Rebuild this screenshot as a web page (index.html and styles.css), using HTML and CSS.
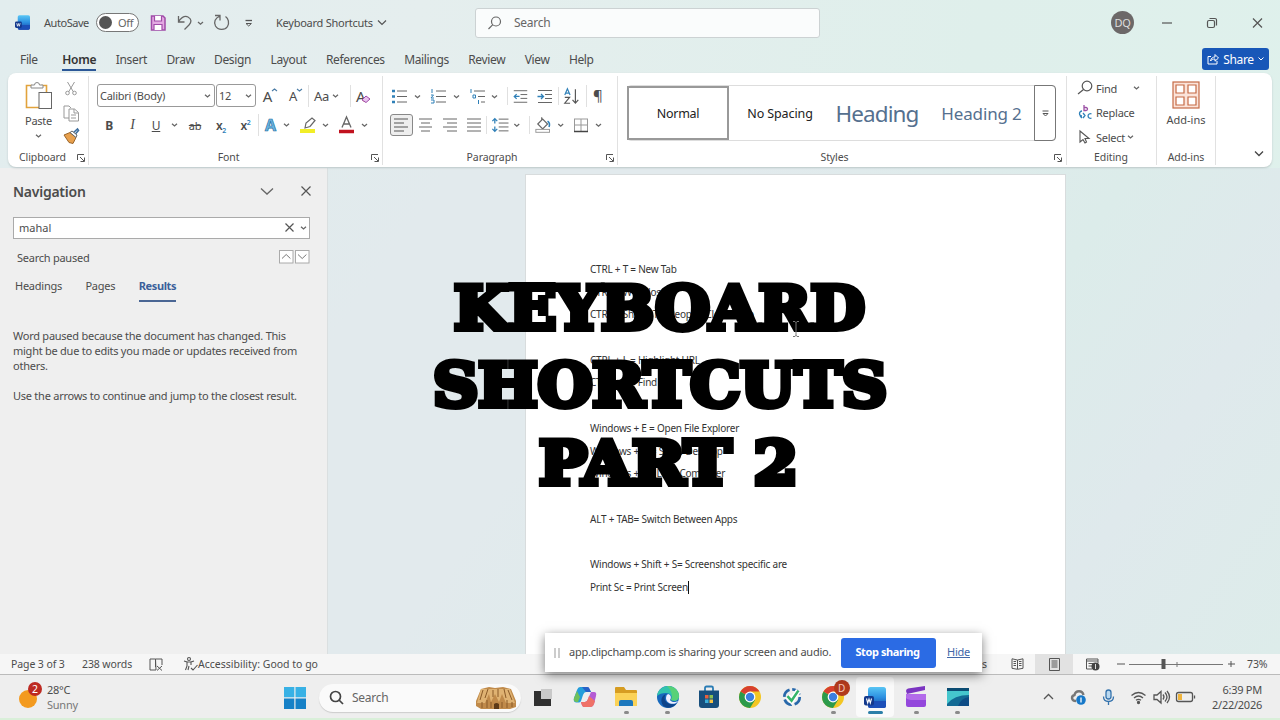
FILE: index.html
```
<!DOCTYPE html>
<html lang="en">
<head>
  <meta charset="UTF-8">
  <title>Keyboard Shortcuts - Word</title>
  <link rel="stylesheet" href="styles.css">
</head>
<body>
  <!-- shared shapes -->
  <svg class="defs" width="0" height="0">
    <defs>
      <path id="caret" d="M0 0l2.500 2.200L5 0" fill="none" stroke="#666" stroke-width="1.300"/>
      <g id="launcher" fill="none" stroke="#555" stroke-width="1"><path d="M.5 6V.5H7M3 3l4 4M7.500 3.500v4h-4"/></g>
      <g id="chrome">
        <circle cx="12" cy="12" r="11" fill="#f3c623"/>
        <path d="M12 12L2.500 6.500A11 11 0 0 0 12 23l5-8z" fill="#2c9a4b"/>
        <path d="M12 12L2.500 6.500A11 11 0 0 1 21.500 6.500H12z" fill="#d8402f"/>
        <circle cx="12" cy="12" r="5.400" fill="#fff"/><circle cx="12" cy="12" r="4.200" fill="#3c7fe0"/>
      </g>
      <linearGradient id="wordGrad" x1="0" y1="0" x2="0" y2="1">
        <stop offset="0" stop-color="#59c6f5"/><stop offset=".5" stop-color="#2b8ee0"/><stop offset="1" stop-color="#173f9d"/>
      </linearGradient>
      <g id="word">
        <rect x="4" y="0" width="18" height="21" rx="2.500" fill="url(#wordGrad)"/>
        <path d="M4 14h18v4.500a2.500 2.500 0 0 1-2.500 2.500h-13A2.500 2.500 0 0 1 4 18.500z" fill="#1c4fb8"/>
        <rect x="0" y="9" width="10" height="9.500" rx="2" fill="#14398c"/>
        <path d="M2.500 11.500l1.200 4.500L5 12l1.300 4 1.200-4.500" fill="none" stroke="#fff" stroke-width="1.100"/>
      </g>
    </defs>
  </svg>

  <div class="window">
    <header class="titlebar">
      <svg class="app-icon" width="15" height="15" viewBox="0 0 22 21"><use href="#word"/></svg>
      <span class="autosave">AutoSave</span>
      <span class="toggle"><i></i>Off</span>
      <svg class="quick" width="100" height="20" viewBox="0 0 100 20">
        <path d="M1.500 3h11.500l2 2v12H1.500z" fill="#e3a9e2" stroke="#a04ba8" stroke-width="1.500"/>
        <path d="M4.500 3v5h7V3M4 17v-5.500h8V17" fill="#fff" stroke="#a04ba8" stroke-width="1.200"/>
        <path d="M28.500 3v6h6M28.500 8.500c3-4 6.500-6 9.500-4.500 4 2 3.500 5.500 1 8l-4.500 4.500" fill="none" stroke="#666" stroke-width="1.300"/>
        <use href="#caret" x="48" y="9"/>
        <path d="M65 2.500h5v5M70 3c-5 2-6.500 6-4.500 10 2.500 4.500 9.500 4.500 12 .5 2-3.500 1-8-2-10" fill="none" stroke="#666" stroke-width="1.300"/>
        <path d="M95.500 7.500h6.500" stroke="#555" stroke-width="1.300"/><path d="M96 10.500l2.700 2.500 2.700-2.500z" fill="none" stroke="#555"/>
      </svg>
      <span class="doc-name">Keyboard Shortcuts</span>
      <svg class="name-caret" width="10" height="6"><path d="M1 .500l4 4 4-4" fill="none" stroke="#555" stroke-width="1.200"/></svg>
      <div class="search">
        <svg width="16" height="16" viewBox="0 0 16 16" fill="none" stroke="#666" stroke-width="1.200"><circle cx="9" cy="6.500" r="4.500"/><path d="M5.800 9.700L1.500 14"/></svg>
        <span>Search</span>
      </div>
      <span class="avatar">DQ</span>
      <svg class="win-buttons" width="102" height="14" viewBox="0 0 102 14" fill="none" stroke="#555" stroke-width="1.200">
        <path d="M0 7h10"/><rect x="45.500" y="4.500" width="7" height="7" rx="1.500"/><path d="M47.500 2.500H53a1.500 1.500 0 0 1 1.500 1.500v5.500"/><path d="M91 2.500l9 9M100 2.500l-9 9"/>
      </svg>
    </header>

    <nav class="tabs">
      <span>File</span><span class="current">Home</span><span>Insert</span><span>Draw</span><span>Design</span><span>Layout</span><span>References</span><span>Mailings</span><span>Review</span><span>View</span><span>Help</span>
      <div class="share">
        <svg width="12" height="12" viewBox="0 0 12 12" fill="none" stroke="#fff" stroke-width="1"><path d="M4 3.500H1v7.500h9V8M3.500 8c.5-3 2.500-4 4.500-4V1.500l3.500 3.500L8 8.200V6C6 6 4.500 6.500 3.500 8z"/></svg>
        <span>Share</span>
        <svg width="6" height="4"><path d="M.500.500L3 3 5.500.500" fill="none" stroke="#fff"/></svg>
      </div>
    </nav>

    <section class="ribbon">
      <div class="group clipboard">
        <div class="tools">
          <div class="paste">
            <svg width="28" height="30" viewBox="0 0 28 30">
              <path d="M7 4.500H1.500v22H14M16 4.500h5.500V11" fill="none" stroke="#e2a33c" stroke-width="1.600"/>
              <path d="M6 7V4h3.500a2.500 2.500 0 0 1 5 0H18v3z" fill="#fff" stroke="#888"/>
              <rect x="14" y="11.500" width="12.500" height="16" fill="#fff" stroke="#666"/>
            </svg>
            <span>Paste</span>
            <svg width="6" height="4"><use href="#caret" y=".8"/></svg>
          </div>
          <svg class="clip-side" width="18" height="66" viewBox="0 0 18 66" fill="none" stroke="#999" stroke-width="1">
            <path d="M5.500 1l6 10M12.500 1l-6 10"/><circle cx="5.500" cy="12" r="1.800"/><circle cx="12.500" cy="12" r="1.800"/>
            <path d="M7 37H2V25h5l2 2M7 28h5.500l4 3.500V40H7zM12 28v4h4M9 34h5M9 37h5"/>
            <path d="M11 52l4.500-4 1 1.500-4 4.500" stroke="#3d6e9e" stroke-width="1.600"/><path d="M2 54l6-2.500 6 5-3 6-4-1z" fill="#e8a04c" stroke="#9a652a"/><path d="M8 51.500l2-1.500 5 4-1 2.500z" fill="#fff" stroke="#666"/>
          </svg>
        </div>
        <div class="label">Clipboard<svg width="9" height="9"><use href="#launcher"/></svg></div>
      </div>

      <div class="group font">
        <div class="row row-font">
          <span class="combo">Calibri (Body)<svg width="6" height="4"><use href="#caret" y=".8"/></svg></span>
          <span class="combo size">12<svg width="6" height="4"><use href="#caret" y=".8"/></svg></span>
          <span class="grow">A<svg width="5" height="4"><path d="M0 3l2.500-2L5 3" fill="none" stroke="#4a7ba5" stroke-width="1.100"/></svg></span>
          <span class="grow small">A<svg width="5" height="4"><path d="M0 1l2.500 2L5 1" fill="none" stroke="#4a7ba5" stroke-width="1.100"/></svg></span>
          <span class="case line">Aa<svg width="6" height="4"><use href="#caret" y=".8"/></svg></span>
          <span class="clear line">A<svg width="10" height="8"><path d="M1 5l4-4 4 3-4 3.500z" fill="#e9c3ef" stroke="#a04ba8"/></svg></span>
        </div>
        <div class="row row-style">
          <b>B</b><i>I</i><u>U</u><svg width="6" height="4"><use href="#caret" y=".8"/></svg><s>ab</s>
          <span class="script">x<sub>2</sub></span><span class="script">x<sup>2</sup></span>
          <span class="effect line">A<svg width="6" height="4"><use href="#caret" y=".8"/></svg></span>
          <svg width="36" height="18" viewBox="0 0 36 18"><path d="M1 15h15" stroke="#f2ee27" stroke-width="4"/><path d="M6 12l1-5 6-5 3 2.500-5 6z" fill="#fff" stroke="#666" stroke-width="1.200"/><use href="#caret" x="24" y="8"/></svg>
          <svg width="36" height="18" viewBox="0 0 36 18"><path d="M2 15.500h15" stroke="#c1121f" stroke-width="3.500"/><path d="M5 11.500L9.500 1 14 11.500M6.500 8h6" fill="none" stroke="#666" stroke-width="1.300"/><use href="#caret" x="25" y="8"/></svg>
        </div>
        <div class="label">Font<svg width="9" height="9"><use href="#launcher"/></svg></div>
      </div>

      <div class="group paragraph">
        <div class="row row-list">
          <svg width="38" height="18" viewBox="0 0 38 18"><path d="M6 4h10M6 9.500h10M6 15h10" stroke="#666"/><path d="M1 4h3M1 9.500h3M1 15h3" stroke="#2f80b8" stroke-width="2.600"/><use href="#caret" x="24" y="8.500"/></svg>
          <svg width="38" height="18" viewBox="0 0 38 18"><path d="M6 4h10M6 9.500h10M6 15h10" stroke="#666"/><path d="M2 2v4M1 8h2.500L1 11h3M1 13h3v3H1" fill="none" stroke="#2f80b8"/><use href="#caret" x="24" y="8.500"/></svg>
          <svg width="37" height="18" viewBox="0 0 37 18"><path d="M5 4h11M9 9.500h7M12 15h4" stroke="#666"/><path d="M2 2v4M4 8h2.500v3H4zM9.500 13v4" fill="none" stroke="#2f80b8"/><use href="#caret" x="23" y="8.500"/></svg>
          <svg class="line" width="26" height="18" viewBox="0 0 26 18"><path d="M6 3.500h14M13 7.500h7M13 11.500h7M6 15.500h14" stroke="#666"/><path d="M12 9.500H6.500M9 7L6.500 9.500 9 12" fill="none" stroke="#2f80b8" stroke-width="1.300"/></svg>
          <svg width="25" height="18" viewBox="0 0 25 18"><path d="M5 3.500h14M12 7.500h7M12 11.500h7M5 15.500h14" stroke="#666"/><path d="M4.500 9.500h6M8 7l2.500 2.500L8 12" fill="none" stroke="#2f80b8" stroke-width="1.300"/></svg>
          <svg class="line" width="28" height="18" viewBox="0 0 28 18"><path d="M6 8l2.700-6.500L11.500 8M7 6h4" fill="none" stroke="#2f80b8" stroke-width="1.200"/><path d="M6 10.500h5L6 16.500h5.500M17 2v14M14 13l3 3.500 3-3.500" fill="none" stroke="#555" stroke-width="1.200"/></svg>
          <span class="pilcrow line">¶</span>
        </div>
        <div class="row row-align">
          <span class="pressed"><svg width="14" height="14"><path d="M0 1h14M0 5h10M0 9h14M0 13h10" stroke="#555"/></svg></span>
          <svg width="14" height="14"><path d="M0 1h13M2 5h9M0 9h13M2 13h9" stroke="#666"/></svg>
          <svg width="14" height="14"><path d="M0 1h14M4 5h10M0 9h14M4 13h10" stroke="#666"/></svg>
          <svg width="14" height="14"><path d="M0 1h14M0 5h14M0 9h14M0 13h14" stroke="#666"/></svg>
          <svg class="line" width="43" height="18" viewBox="0 0 43 18"><path d="M12 3h10M12 7h10M12 11h10M12 15h10" stroke="#666"/><path d="M8 2.500v5M5.500 5L8 2.500 10.500 5M8 10.500v5M5.500 13L8 15.500l2.500-2.500" fill="none" stroke="#2f80b8" stroke-width="1.300"/><use href="#caret" x="28" y="8"/></svg>
          <svg class="line" width="40" height="18" viewBox="0 0 40 18"><path d="M8 8l5-5 5 5-5 5zM12 4V1" fill="none" stroke="#666" stroke-width="1.200"/><path d="M18 5q3 2 1.500 6" fill="none" stroke="#2f80b8" stroke-width="1.600"/><rect x="6" y="13.500" width="14" height="3" fill="#fff" stroke="#999"/><use href="#caret" x="29" y="8"/></svg>
          <svg width="40" height="18" viewBox="0 0 40 18"><path d="M5.500 3v12M12 3v12M18.500 3v12M5 3h14M5 9h14" stroke="#999"/><path d="M5 15.500h14" stroke="#444" stroke-width="1.500"/><use href="#caret" x="27" y="8"/></svg>
        </div>
        <div class="label">Paragraph<svg width="9" height="9"><use href="#launcher"/></svg></div>
      </div>

      <div class="group styles">
        <div class="gallery">
          <span class="normal">Normal</span><span class="plain">No Spacing</span><span class="h1">Heading</span><span class="h2">Heading 2</span>
          <span class="more"><svg width="7" height="7"><path d="M.500 1h6M1 3.500L3.500 6 6 3.500z" fill="none" stroke="#555"/></svg></span>
        </div>
        <div class="label">Styles<svg width="9" height="9"><use href="#launcher"/></svg></div>
      </div>

      <div class="group editing">
        <div class="edit-list">
          <div><svg width="16" height="16" viewBox="0 0 16 16" fill="none" stroke="#555" stroke-width="1.200"><circle cx="10" cy="6" r="4.800"/><path d="M6.500 9.500L1 14"/></svg><span>Find</span><svg class="far" width="6" height="4"><use href="#caret" y=".8"/></svg></div>
          <div><svg width="16" height="16" viewBox="0 0 16 16" fill="none" stroke-width="1.300"><path d="M7 0v5.500h2a1.500 1.500 0 0 0 0-3H7" stroke="#9b4fa5"/><path d="M5 6a2.500 2.500 0 1 0 0 5M5 13l-2-2" stroke="#2f80b8"/><path d="M6 8l2 2.500-2 2.500M14.500 9a2.300 2.300 0 1 0 0 4" stroke="#2f80b8"/></svg><span>Replace</span></div>
          <div><svg width="16" height="16" viewBox="0 0 16 16" fill="none" stroke="#555" stroke-width="1.100"><path d="M3 2v11l3-2.500L8 14l1.500-1L8 9.500h4z"/></svg><span>Select</span><svg width="6" height="4"><use href="#caret" y=".8"/></svg></div>
        </div>
        <div class="label">Editing</div>
      </div>

      <div class="group addins">
        <svg width="28" height="28" viewBox="0 0 28 28" fill="none" stroke="#c56a45" stroke-width="1.200"><rect x="1" y="1" width="26" height="26" fill="#fbe3d9"/><path d="M4 4h8v8H4zM16 4h8v8h-8zM4 16h8v8H4zM16 16h8v8h-8z" fill="#fff"/></svg>
        <span>Add-ins</span>
        <div class="label">Add-ins</div>
      </div>
      <svg class="collapse" width="10" height="6"><path d="M1 .500l4 4 4-4" fill="none" stroke="#444" stroke-width="1.300"/></svg>
    </section>

    <main class="workspace">
      <aside class="navigation">
        <div class="nav-head">
          <h2>Navigation</h2>
          <svg width="14" height="9"><path d="M1 1.500l6 5.500 6-5.500" fill="none" stroke="#666" stroke-width="1.300"/></svg>
          <svg width="10" height="10"><path d="M.500.500l9 9M9.500.500l-9 9" stroke="#555" stroke-width="1.200"/></svg>
        </div>
        <div class="nav-input"><span>mahal</span><svg width="9" height="9"><path d="M.500.500l8 8M8.500.500l-8 8" stroke="#555" stroke-width="1.200"/></svg><svg width="6" height="4"><use href="#caret" y=".8"/></svg></div>
        <div class="nav-state"><span>Search paused</span>
          <svg width="31" height="14" fill="#fff" stroke="#aaa"><rect x=".5" y=".5" width="13.500" height="12.500"/><rect x="16.500" y=".5" width="13.500" height="12.500"/><path d="M3 8.500l4.200-4 4.200 4M19 4.500l4.200 4 4.200-4" fill="none" stroke="#777"/></svg>
        </div>
        <div class="nav-tabs"><span>Headings</span><span>Pages</span><span class="current">Results</span></div>
        <p>Word paused because the document has changed. This<br>might be due to edits you made or updates received from<br>others.</p>
        <p>Use the arrows to continue and jump to the closest result.</p>
      </aside>
      <article class="page">
        <p>CTRL + T = New Tab</p>
        <p>CTRL + W = Close</p>
        <p>CTRL + Shift + T = Reopen Closed Tab</p>
        <p></p>
        <p>CTRL + L = Highlight URL</p>
        <p>CTRL + F = Find</p>
        <p></p>
        <p>Windows + E = Open File Explorer</p>
        <p>Windows + D = Show Desktop</p>
        <p>Windows + L = Lock Computer</p>
        <p></p>
        <p>ALT + TAB= Switch Between Apps</p>
        <p></p>
        <p>Windows + Shift + S= Screenshot specific are</p>
        <p>Print Sc = Print Screen<i class="cursor"></i></p>
      </article>
    </main>

    <footer class="status">
      <span class="pages">Page 3 of 3</span><span class="words">238 words</span>
      <svg class="proof" width="14" height="13" fill="none" stroke="#555"><path d="M6.500 1H1v11h6zM6.500 1H13v6M6.500 1v8M8 8l5 4.500M13 8l-5 4.500"/></svg>
      <svg class="access" width="15" height="14" fill="none" stroke="#555" stroke-width="1.100"><circle cx="6" cy="2" r="1.500"/><path d="M1 4l3 1v4l-1.500 4M11 4L8 5v3M4 5h4M6 9l-1 4M8 11l2 2 4.500-5"/></svg>
      <span class="good">Accessibility: Good to go</span>
      <span class="focus">s</span>
      <svg class="read" width="13" height="12" fill="none" stroke="#555"><path d="M6.500 2L1 .800v9.500l5.500 1 5.500-1V.800zM6.500 2v9M2.500 3.500H5M2.500 5.500H5M2.500 7.500H5M8 3.500h2.500M8 5.500h2.500M8 7.500h2.500"/></svg>
      <span class="print"><svg width="11" height="13" fill="none" stroke="#555"><path d="M.500.500h10v12H.500zM2.500 3h6M2.500 5h6M2.500 7h6M2.500 9h6"/></svg></span>
      <svg class="web" width="14" height="13" fill="none" stroke="#555"><path d="M6 11H.500V1H12v4M.500 3H12M2.500 5.500H7M2.500 8H6"/><circle cx="9.500" cy="8.500" r="4" fill="#444" stroke="none"/><path d="M9.500 6v5" stroke="#ddd"/></svg>
      <svg class="zoom" width="115" height="12" fill="none" stroke="#777"><path d="M0 6h8M114 3v6M111 6h7" stroke="#555"/><path d="M12 6.500h94M60 4v5"/><path d="M46.500 1v10" stroke="#555" stroke-width="4"/></svg>
      <span class="percent">73%</span>
    </footer>
  </div>

  <div class="taskbar">
    <div class="weather">
      <svg width="26" height="28" viewBox="0 0 26 28"><circle cx="11" cy="17" r="9" fill="#f39a1f"/><circle cx="18" cy="7" r="7" fill="#bd2a22"/><text x="15" y="11" fill="#fff" font-size="10.500">2</text></svg>
      <div><span>28°C</span><span class="dim">Sunny</span></div>
    </div>
    <svg class="start" width="22" height="22" viewBox="0 0 22 22"><path d="M0 0h10.300v10.300H0zM11.500 0H22v10.300H11.500z" fill="#38b1e5"/><path d="M0 11.500h10.300V22H0zM11.500 11.500H22V22H11.500z" fill="#1681c7"/></svg>
    <div class="task-search">
      <svg width="15" height="15" fill="none" stroke="#444" stroke-width="1.700"><circle cx="6.500" cy="6.500" r="5"/><path d="M10 10l4 4"/></svg>
      <span>Search</span>
      <svg class="hut" width="44" height="24" viewBox="0 0 44 24">
        <path d="M7 3l8-2 6 1 8-1 8 2 5 12v6l-6 2H7l-5-3V15z" fill="#c08a4a"/>
        <path d="M7 3l-4 14h8l4-9 2 8 4-8 4 8 3-8 4 9h9L36 3z" fill="#dfb272"/>
        <path d="M9 4L6 14M14 3l-3 9M19 4v7M24 3v8M30 3l2 9M34 4l4 10M8 16v6M13 14v8M17 16v6M28 16v6M33 14v8M38 16v5" stroke="#8a5a28" stroke-width="1"/>
        <path d="M20 23v-5q2.500-2 5 0v5z" fill="#5d3a18"/>
      </svg>
    </div>
    <div class="apps">
      <span><svg width="20" height="22" viewBox="0 0 20 22"><path d="M1 5h7v8h10v7H1z" fill="#303030"/><path d="M8 3h11v10H8z" fill="#c9c9c9"/></svg></span>
      <span><svg width="24" height="24" viewBox="0 0 24 24"><path d="M7 2h7q2 0 2.500 2L18 7h-5q-2 0-3 3l-2 6q-.5 1.500-2.500 1.500H3Q0 17 1 13L4 5q1-3 3-3z" fill="#249edb"/><path d="M4 6l3 6-2 5H3q-3-1-2-4z" fill="#70c05b"/><path d="M14 2q2 0 2.500 2L18 7h3q3 0 2 4l-2 8q-1 3-3 3h-7q-2 0-3-5h4q2 0 3-3l3-7q-3-5-4-5z" fill="#b45bd4"/><path d="M8 17h4q2 0 3-3l1-3 6 5-1 3q-1 3-3 3h-7q-2 0-3-5z" fill="#ef7268"/><path d="M9 2h5q2 0 2.500 2L18 7h-5z" fill="#2762c8"/></svg></span>
      <span class="open"><svg width="24" height="22" viewBox="0 0 24 22"><path d="M1 2q0-1 1-1h8l2 3h10q1 0 1 1v15H1z" fill="#d79d22"/><path d="M1 7h22v13H1z" fill="#fbd257"/><path d="M5 20v-4q0-2 2-2h10q2 0 2 2v4z" fill="#1d78bd"/></svg></span>
      <span class="open"><svg width="24" height="24" viewBox="0 0 24 24"><circle cx="12" cy="12" r="11" fill="#1769bd"/><path d="M1 11C3-2 21-2 23 10c1 5-4 7-8 5 2-4-1-7-5-7-4 0-7 1-9 3z" fill="#32c4ae"/><path d="M13 1c6 1 10 5 10 10 0 4-4 6-8 4 2-4 1-9-4-14z" fill="#58d178"/><path d="M10 9c-4 5 1 12 9 10 1 0 2-1 2-1-3 4-8 6-12 4-5-3-5-11 1-13z" fill="#0d4389"/><path d="M12 9c4 1 3 5 2 6 2 3 6 2 8 1-3 5-12 3-12-3q0-3 2-4z" fill="#eef"/></svg></span>
      <span><svg width="22" height="24" viewBox="0 0 22 24"><path d="M7 6V3q0-1.500 1.500-1.500h5Q15 1.500 15 3v3" fill="none" stroke="#2b7db5" stroke-width="1.800"/><path d="M1 5.500h20V20q0 3-3 3H4q-3 0-3-3z" fill="#174f7d"/><path d="M7 10h3.500v3.500H7z" fill="#e5603e"/><path d="M11.500 10H15v3.500h-3.500z" fill="#8cc152"/><path d="M7 14.500h3.500V18H7z" fill="#3bafda"/><path d="M11.500 14.500H15V18h-3.500z" fill="#f6c244"/></svg></span>
      <span><svg width="24" height="24"><use href="#chrome"/></svg></span>
      <span><svg width="20" height="20" viewBox="0 0 22 22" fill="none"><circle cx="11" cy="11" r="8.500" stroke="#2868aa" stroke-width="3" stroke-dasharray="10.350 3"/><path d="M6 10l4.500 5L18 4" stroke="#fff" stroke-width="6"/><path d="M6 10l4.500 5L18 4" stroke="#35b56a" stroke-width="2.800"/></svg></span>
      <span class="open profile"><svg width="24" height="24"><use href="#chrome"/></svg><em>D</em></span>
      <span class="open active"><svg width="22" height="21"><use href="#word"/></svg></span>
      <span class="open"><svg width="22" height="22" viewBox="0 0 22 22"><path d="M1 5q0-2 2-2.500L20 0v4L2 8z" fill="#7c35c2"/><path d="M1 8h20v11q0 2-2 2H3q-2 0-2-2z" fill="#9447dc"/><path d="M1 8h20v6H8q-5 0-7-2z" fill="#b36bea"/></svg></span>
      <span class="open"><svg width="24" height="20" viewBox="0 0 24 20"><path d="M1 1h22v18H1z" fill="#136a94"/><path d="M1 4h22v4Q8 8 1 17z" fill="#45c6cd"/><path d="M1 1h22v3H1z" fill="#0c4c73"/><path d="M12 19q3-8 11-9v9z" fill="#0e4c86"/></svg></span>
    </div>
    <div class="tray">
      <svg width="150" height="20" viewBox="0 0 150 20" fill="none" stroke="#555" stroke-width="1.300">
        <path d="M1 12l4.500-4.500L10 12"/>
        <path d="M33 14c-5 0-5-5-1.500-6 1-5 8-5 9 0" stroke="#777" stroke-width="2.400"/><circle cx="38" cy="13" r="4.800" fill="#1678c8" stroke="none"/><path d="M38 10.500v5" stroke="#fff"/>
        <rect x="63" y="3" width="5" height="9" rx="2.500" fill="#b9d8f0" stroke="#3573ad"/><path d="M60.500 9.500q0 5 5 5 5 0 5-5M65.500 14.500V18" stroke="#3573ad"/>
        <path d="M88.500 8.500q7-6 14 0M91 11q4.500-4 9 0M93 13.300q2.500-2 5 0"/><circle cx="95.500" cy="15.500" r="1" fill="#555"/>
        <path d="M111 8h3l4-3.500v11.500l-4-3.500h-3zM120 7.500q2 2.500 0 5M122 5.500q4 4.500 0 9M124 4q5 6 0 12"/>
        <rect x="133.500" y="5.500" width="16" height="9" rx="2"/><path d="M135 7h4v6h-4z" fill="#efb43c" stroke="none"/><path d="M151.500 8.500v3"/>
      </svg>
      <div class="clock"><span>6:39 PM</span><span>2/22/2026</span></div>
    </div>
  </div>

  <div class="sharing">
    <i class="grip"></i><span>app.clipchamp.com is sharing your screen and audio.</span><button>Stop sharing</button><a>Hide</a>
  </div>

  <!-- video title caption -->
  <svg class="caption" width="480" height="240" viewBox="0 0 480 240">
    <text x="34" y="78.500" textLength="411" lengthAdjust="spacingAndGlyphs">KEYBOARD</text>
    <text x="13" y="156" textLength="454" lengthAdjust="spacingAndGlyphs">SHORTCUTS</text>
    <text x="119" y="234" textLength="259" lengthAdjust="spacingAndGlyphs">PART 2</text>
  </svg>

  <svg class="mouse" width="8" height="16" fill="none" stroke="#777"><path d="M1 .500h2l1 1 1-1h2M4 1v14M1 15.500h2l1-1 1 1h2"/></svg>
</body>
</html>
```
FILE: styles.css
```
* {
  box-sizing: border-box;
}

body {
  margin: 0;
  width: 1280px;
  height: 720px;
  overflow: hidden;
  position: relative;
  font-family: "Noto Sans", "Open Sans", sans-serif;
  font-size: 11px;
  letter-spacing: -0.25px;
  color: #4c4c4c;
  background: linear-gradient(100deg, #e2edee 0%, #e5eeee 30%, #dfefeb 70%, #dff1ec 100%);
}

svg {
  display: block;
  flex: none;
  overflow: visible;
}

span {
  white-space: nowrap;
}

.defs {
  position: absolute;
}

.window {
  height: 675px;
  display: flex;
  flex-direction: column;
}

/* title bar */
.titlebar {
  height: 45px;
  display: flex;
  align-items: center;
  padding-left: 15px;
}

.autosave {
  margin-left: 14px;
  width: 52px;
  letter-spacing: -0.45px;
}

.toggle {
  width: 43px;
  height: 19px;
  border: 1px solid #777;
  border-radius: 10px;
  background: #fff;
  display: flex;
  align-items: center;
  gap: 6px;
  padding-left: 2px;
  color: #666;
}

.toggle i {
  width: 13px;
  height: 13px;
  border-radius: 50%;
  background: #555;
}

.quick {
  margin-left: 11px;
}

.doc-name {
  margin-left: 26px;
  width: 98px;
}

.name-caret {
  margin-left: 3px;
}

.search {
  margin-left: 88px;
  width: 345px;
  height: 30px;
  border: 1px solid #ccd2d3;
  border-radius: 3px;
  background: #fafcfc;
  display: flex;
  align-items: center;
  gap: 11px;
  padding-left: 11px;
  font-size: 12px;
  color: #666;
}

.avatar {
  margin-left: 291px;
  width: 23px;
  height: 23px;
  line-height: 23px;
  text-align: center;
  border-radius: 50%;
  background: #6c6868;
  color: #ddd;
}

.win-buttons {
  margin-left: 28px;
}

/* tabs */
.tabs {
  height: 28px;
  display: flex;
  align-items: flex-start;
  gap: 19.400px;
  padding: 3px 11px 0 20px;
  font-size: 12px;
  line-height: 23px;
  letter-spacing: -0.350px;
}

.tabs > span:first-child {
  margin-right: 5px;
}

.tabs .current {
  height: 23px;
  font-weight: 600;
  color: #333;
  letter-spacing: -0.2px;
  border-bottom: 2px solid #2b5797;
}

.share {
  margin-left: auto;
  width: 67px;
  height: 22px;
  border-radius: 3px;
  background: #1857b8;
  color: #fff;
  display: flex;
  align-items: center;
  justify-content: center;
  gap: 4px;
}

/* ribbon */
.ribbon {
  margin: 0 8px;
  height: 94px;
  flex: none;
  display: flex;
  padding-top: 3px;
  background: #fff;
  border-radius: 8px;
  box-shadow: 0 1px 2px #bcc7c8;
  position: relative;
}

.group {
  height: 89px;
  display: flex;
  flex-direction: column;
  border-right: 1px solid #e1e1e1;
}

.label {
  margin-top: auto;
  height: 15px;
  line-height: 15px;
  display: flex;
  justify-content: center;
  font-size: 10.500px;
  letter-spacing: -0.1px;
  position: relative;
}

.label svg {
  position: absolute;
  right: 2px;
  top: 4px;
}

.clipboard {
  width: 81px;
}

.clipboard .label {
  padding-right: 11px;
}

.tools {
  display: flex;
  padding: 5px 0 0 16px;
}

.paste {
  display: flex;
  flex-direction: column;
  align-items: center;
  width: 29px;
}

.paste span {
  line-height: 19px;
}

.paste > svg:last-child {
  margin-top: 4px;
}

.clip-side {
  margin-left: 9px;
}

.font {
  width: 294px;
  padding-left: 8px;
}

.row {
  height: 28px;
  display: grid;
  align-items: center;
}

.row + .row {
  margin-top: 1px;
}

.row > * {
  justify-self: center;
}

.row .line {
  border-left: 1px solid #e0e0e0;
  justify-self: start;
}

.row-font,
.row-list {
  margin-top: 5px;
  height: 29px;
}

.row-font {
  grid-template-columns: 119px 41px 26px 25px 42px 30px;
}

.combo {
  width: 118px;
  height: 23px;
  border: 1px solid #999;
  border-radius: 3px;
  display: flex;
  align-items: center;
  justify-content: space-between;
  padding: 0 3px 0 2px;
  justify-self: start !important;
}

.combo.size {
  width: 40px;
}

.grow {
  font-size: 15px;
  display: flex;
  line-height: 18px;
}

.grow.small {
  font-size: 13px;
}

.grow svg {
  margin-top: 1px;
}

.case {
  width: 42px;
  height: 22px;
  display: flex;
  align-items: center;
  gap: 4px;
  padding-left: 5px;
  font-size: 13px;
}

.clear {
  height: 22px;
  display: flex;
  align-items: center;
  padding-left: 5px;
  font-size: 15px;
}

.clear svg {
  margin: 6px 0 0 -4px;
}

.row-style {
  grid-template-columns: 24px 23px 24px 13px 28px 24px 25px 39px 39px 38px;
  font-size: 12px;
}

.row-style i {
  font-family: "Liberation Serif", serif;
  font-size: 14px;
}

.row-style s {
  font-size: 11px;
}

.script {
  font-weight: 600;
}

.script sub,
.script sup {
  font-size: 7px;
  line-height: 0;
  color: #2f80b8;
}

.effect {
  width: 38px;
  height: 22px;
  display: flex;
  align-items: center;
  gap: 8px;
  padding-left: 6px;
  font-size: 16px;
  font-weight: bold;
  color: #6cb6e4;
  -webkit-text-stroke: 0.7px #256f9f;
}

.font .label {
  padding-right: 22px;
}

.paragraph {
  width: 235px;
  padding-left: 6px;
}

.row-list {
  grid-template-columns: 39px 39px 38px 26px 25px 28px 30px;
  padding-left: 2px;
}

.row-list > svg {
  justify-self: start;
}

.pilcrow {
  height: 22px;
  padding-left: 6px;
  font-size: 15px;
}

.row-align {
  grid-template-columns: 24px 25px 24px 24px 43px 40px 40px;
}

.pressed {
  width: 23px;
  height: 22px;
  border: 1px solid #888;
  border-radius: 3px;
  background: #eee;
  display: flex;
  align-items: center;
  justify-content: center;
}

.paragraph .label {
  padding-right: 22px;
}

.styles {
  width: 449px;
  padding: 9px 10px 0 9px;
}

.gallery {
  height: 56px;
  display: flex;
  border: 1px solid #ddd;
  border-radius: 4px;
  font-size: 12.500px;
  color: #222;
}

.gallery span {
  display: flex;
  align-items: center;
  justify-content: center;
}

.gallery .normal {
  width: 102px;
  margin-left: -1px;
  border: 2px solid #999;
}

.gallery .plain {
  width: 102px;
  letter-spacing: -0.1px;
}

.gallery .h1 {
  width: 92px;
  font-size: 22.500px;
  letter-spacing: -0.9px;
  color: #55708f;
}

.gallery .h2 {
  flex: 1;
  padding-left: 5px;
  font-size: 17px;
  letter-spacing: -0.15px;
  color: #55708f;
}

.gallery .more {
  width: 22px;
  margin: -1px;
  border: 1px solid #777;
  border-radius: 0 4px 4px 0;
}

.styles .label {
  padding-right: 24px;
  margin-right: -10px;
}

.styles .label svg {
  right: 3px;
}

.editing {
  width: 90px;
  padding-left: 10px;
}

.edit-list div {
  height: 24.500px;
  display: flex;
  align-items: center;
  gap: 3px;
}

.edit-list .far {
  margin-left: 14px;
}

.editing .label {
  padding-right: 11px;
}

.addins {
  width: 59px;
  align-items: center;
  padding-top: 5px;
}

.addins span {
  margin-top: 3px;
  letter-spacing: 0;
}

.collapse {
  margin: 75px 0 0 38px;
}

/* workspace */
.workspace {
  flex: 1;
  display: flex;
  margin-top: 1px;
  min-height: 0;
  background: linear-gradient(125deg, #dfedec 0%, #e2eaed 28%, #e2eaed 45%, #dcecea 70%, #dfe9ec 84%, #ddecea 100%);
}

.navigation {
  width: 328px;
  padding: 12px 16px 0 13px;
  background: #efefef;
  border-right: 1px solid #dadfe0;
}

.nav-head {
  height: 22px;
  display: flex;
  align-items: center;
  gap: 27px;
}

.nav-head h2 {
  flex: 1;
  margin: 0;
  font-size: 14px;
  font-weight: 600;
}

.nav-input {
  width: 297px;
  height: 22px;
  margin-top: 15px;
  border: 1px solid #aaa;
  background: #fff;
  display: flex;
  align-items: center;
  gap: 7px;
  padding: 0 2px 1px 5px;
}

.nav-input span {
  flex: 1;
  margin-top: -1px;
  letter-spacing: 0;
}

.nav-state {
  width: 297px;
  height: 20px;
  margin-top: 8px;
  display: flex;
  justify-content: space-between;
  align-items: center;
  padding-left: 4px;
}

.nav-tabs {
  display: flex;
  gap: 23.500px;
  margin: 11px 0 25px 2px;
  height: 25px;
}

.nav-tabs .current {
  height: 24px;
  font-weight: bold;
  letter-spacing: -0.4px;
  color: #3b5f9b;
  border-bottom: 2px solid #4a6694;
}

.navigation p {
  margin: 0 0 15px;
  line-height: 15px;
  white-space: nowrap;
}

.page {
  width: 541px;
  margin: 6px 0 0 197px;
  padding: 83px 0 0 64px;
  border: 1px solid #d8dcdd;
  border-bottom: 0;
  background: #fff;
}

.page p {
  margin: 0;
  height: 22.700px;
  line-height: 22px;
  font-size: 10px;
  letter-spacing: -0.23px;
  color: #333;
  white-space: nowrap;
}

.cursor {
  display: inline-block;
  width: 1px;
  height: 13px;
  background: #111;
  vertical-align: middle;
}

/* status bar */
.status {
  height: 21px;
  flex: none;
  display: flex;
  align-items: center;
  background: #f6f6f6;
  border-bottom: 1px solid #bbb;
  font-size: 10.500px;
  letter-spacing: -0.1px;
}

.pages {
  margin-left: 11px;
  width: 71px;
}

.words {
  width: 67px;
}

.access {
  margin-left: 20px;
}

.good {
  margin-left: 0;
  width: 121px;
  letter-spacing: 0;
}

.focus {
  margin-left: 663px;
  width: 29px;
}

.print {
  width: 38px;
  height: 20px;
  margin-left: 11px;
  margin-right: 13px;
  display: flex;
  align-items: center;
  justify-content: center;
  background: #e2e2e2;
}

.zoom {
  margin-left: 17px;
}

.percent {
  margin-left: 15px;
}

/* taskbar */
.taskbar {
  height: 45px;
  display: flex;
  align-items: center;
  background: #eee;
  border-bottom: 2px solid #d9efd9;
}

.weather {
  width: 284px;
  display: flex;
  gap: 4px;
  padding-left: 17px;
}

.weather div,
.clock {
  display: flex;
  flex-direction: column;
  line-height: 15px;
}

.dim {
  color: #777;
}

.start {
  margin-top: 2px;
}

.task-search {
  margin-left: 13px;
  width: 202px;
  height: 28px;
  border-radius: 14px;
  background: #fafafa;
  box-shadow: 0 1px 1px #ccc;
  display: flex;
  align-items: center;
  gap: 8px;
  padding: 0 3px 0 10px;
  margin-top: 2px;
  font-size: 12px;
  color: #666;
}

.hut {
  margin-left: auto;
}

.apps {
  display: flex;
  margin: 1px 0 0 3px;
  gap: 3px;
}

.apps span {
  position: relative;
  width: 38.450px;
  height: 40px;
  display: flex;
  align-items: center;
  justify-content: center;
}

.apps .open::after {
  content: "";
  position: absolute;
  left: 17px;
  bottom: 3px;
  width: 5px;
  height: 3px;
  border-radius: 2px;
  background: #8a8a8a;
}

.apps .active {
  background: #fafafa;
  border-radius: 4px;
}

.apps .active::after {
  left: 12px;
  width: 15px;
  background: #2c7fa8;
}

.profile em {
  position: absolute;
  right: 3px;
  top: 3px;
  width: 16px;
  height: 16px;
  line-height: 16px;
  border-radius: 50%;
  text-align: center;
  font-size: 10px;
  font-style: normal;
  color: #f6c9bb;
  background: #b23a1c;
}

.tray {
  margin-left: auto;
  display: flex;
  align-items: center;
  padding-right: 18px;
}

.clock {
  width: 69px;
  text-align: right;
}

/* screen sharing notice */
.sharing {
  position: absolute;
  left: 545px;
  top: 633px;
  width: 437px;
  height: 39px;
  display: flex;
  align-items: center;
  padding-left: 9px;
  background: #fff;
  box-shadow: 0 3px 10px rgba(0, 0, 0, 0.5);
}

.sharing span {
  margin-top: -2px;
  letter-spacing: -0.25px;
}

.grip {
  width: 6px;
  height: 10px;
  border: 1px solid #ccc;
  border-width: 0 2px;
  margin-right: 9px;
}

.sharing button {
  margin-left: auto;
  width: 95px;
  height: 30px;
  border: 0;
  border-radius: 3px;
  background: #2b6be4;
  color: #fff;
  font: bold 11px "Noto Sans", sans-serif;
  letter-spacing: -0.4px;
  padding: 0 2px 2px 0;
}

.sharing a {
  margin: -2px 12px 0 11px;
  color: #4267a8;
  text-decoration: underline;
}

.mouse {
  position: absolute;
  left: 792px;
  top: 321px;
}

/* caption */
.caption {
  position: absolute;
  left: 420px;
  top: 250px;
}

.caption text {
  font-family: "DejaVu Serif", serif;
  font-weight: bold;
  font-size: 60px;
  letter-spacing: 0;
  fill: #000;
  stroke: #000;
  stroke-width: 6px;
}
```
